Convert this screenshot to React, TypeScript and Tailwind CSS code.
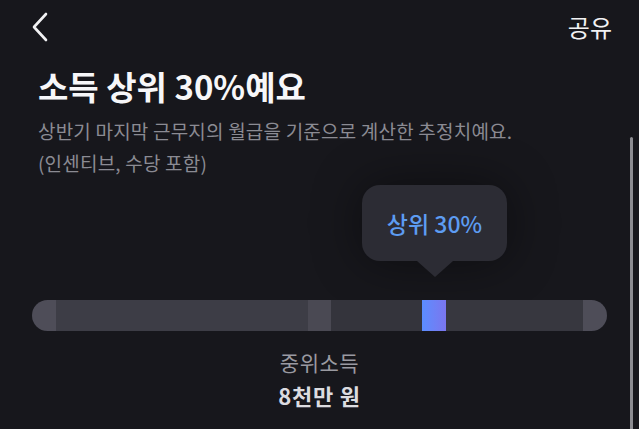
import React from "react";

const font = { fontFamily: '"Noto Sans CJK KR", "Noto Sans", sans-serif' };

// segments of the income bar, left to right
const segments = [
  { w: "w-[24px]", c: "bg-[#4e4d58]" },
  { w: "w-[252px]", c: "bg-[#3d3d46]" },
  { w: "w-[23px]", c: "bg-[#4a4953]" },
  { w: "w-[91px]", c: "bg-[#34343c]" },
  { w: "w-[24px]", c: "bg-gradient-to-r from-[#5a8dff] to-[#7a76ee]" },
  { w: "w-[137px]", c: "bg-[#37373f]" },
  { w: "w-[24px]", c: "bg-[#4e4d58]" },
];

export default function App() {
  return (
    <div className="relative w-[639px] h-[429px] overflow-hidden bg-[#17171c] text-white" style={font}>
      <header className="flex h-[54px] items-center justify-between pl-[30px] pr-[27px]">
        <svg width="20" height="30" viewBox="0 0 20 30" fill="none">
          <path d="M16 2 L4 15 L16 28" stroke="#f2f2f4" strokeWidth="2.6" strokeLinecap="round" strokeLinejoin="round" />
        </svg>
        <span className="text-[24px] leading-[30px] text-[#f2f2f4]">공유</span>
      </header>

      <main className="flex flex-col px-[38px]">
        <h1 className="mt-[12px] text-[33px] font-bold leading-[40px] text-[#f7f7f9]">
          소득 상위 30%예요
        </h1>
        <p className="mt-[9px] text-[19px] leading-[32px] tracking-[0.2px] text-[#8b8b93]">
          상반기 마지막 근무지의 월급을 기준으로 계산한 추정치예요.
          <br />
          (인센티브, 수당 포함)
        </p>

        <div className="mt-[6px] ml-[324px] flex flex-col items-center w-[145px]">
          <div className="flex h-[76px] w-[145px] items-center justify-center rounded-[18px] bg-[#2c2c34] shadow-[0_0_50px_rgba(0,0,0,0.45)]">
            <span className="text-[23px] font-medium text-[#5d9cf2]">상위 30%</span>
          </div>
          <div className="h-0 w-0 border-x-[18px] border-t-[16px] border-x-transparent border-t-[#2c2c34]" />
        </div>

        <div className="mt-[23px] -ml-[6px] flex h-[31px] w-[575px] overflow-hidden rounded-full">
          {segments.map((s, i) => (
            <div key={i} className={`${s.w} ${s.c} h-full`} />
          ))}
        </div>

        <div className="mt-[16px] flex flex-col items-center -ml-[38px] w-[639px]">
          <span className="text-[21px] leading-[30px] tracking-[0.5px] text-[#9a9aa1]">중위소득</span>
          <span className="mt-[3px] text-[22px] font-bold leading-[30px] tracking-[0.8px] text-[#dcdce0]">8천만 원</span>
        </div>
      </main>

      <div className="absolute right-[6px] top-[137px] h-[300px] w-[3px] rounded-full bg-[#8c8c91]" />
    </div>
  );
}
